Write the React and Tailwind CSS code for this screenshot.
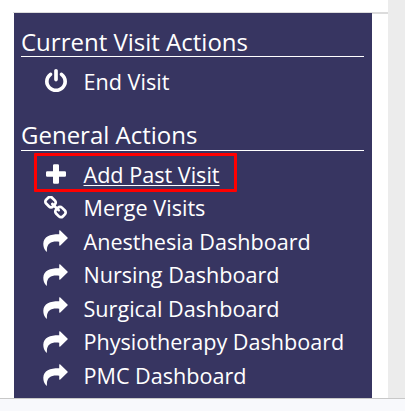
const icons = {
  power: {
    box: "128 0 1536 1664",
    size: "w-[22px] h-[23px] mb-[2.5px]",
    d: "M1664 896q0 156-61 298t-164 245-245 164-298 61-298-61-245-164-164-245-61-298q0-182 80.5-343t226.5-270q43-32 95.5-25t83.5 50q32 42 24.5 94.5t-49.5 84.5q-98 74-151.5 181t-53.5 228q0 104 40.5 198.5t109.5 163.5 163.5 109.5 198.5 40.5 198.5-40.5 163.5-109.5 109.5-163.5 40.5-198.5q0-121-53.5-228t-151.5-181q-42-32-49.5-84.5t24.5-94.5q31-43 84-50t95 25q146 109 226.5 270t80.5 343zm-640-768v640q0 52-38 90t-90 38-90-38-38-90v-640q0-52 38-90t90-38 90 38 38 90z",
  },
  plus: {
    box: "0 0 20 20",
    size: "w-5 h-5 mb-px",
    d: "M8.2 0.3h3.6q1.2 0 1.2 1.2v5.7h5.8q1.2 0 1.2 1.2v3.2q0 1.2-1.2 1.2h-5.8v5.7q0 1.2-1.2 1.2h-3.6q-1.2 0-1.2-1.2v-5.7h-5.8q-1.2 0-1.2-1.2v-3.2q0-1.2 1.2-1.2h5.8v-5.7q0-1.2 1.2-1.2z",
  },
  link: {
    box: "80 48 1632 1632",
    size: "w-[23px] h-[23px]",
    d: "M1520 1216q0-40-28-68l-208-208q-28-28-68-28-42 0-72 32 3 3 19 18.5t21.5 21.5 15 19 13 25.5 3.5 27.5q0 40-28 68t-68 28q-15 0-27.5-3.5t-25.5-13-19-15-21.5-21.5-18.5-19q-33 31-33 73 0 40 28 68l206 207q27 27 68 27 40 0 68-26l147-146q28-28 28-67zm-703-705q0-40-28-68l-206-207q-28-28-68-28-39 0-68 27l-147 146q-28 28-28 67 0 40 28 68l208 208q27 27 68 27 42 0 72-31-3-3-19-18.5t-21.5-21.5-15-19-13-25.5-3.5-27.5q0-40 28-68t68-28q15 0 27.5 3.5t25.5 13 19 15 21.5 21.5 18.5 19q33-31 33-73zm895 705q0 120-85 203l-147 146q-83 83-203 83-121 0-204-85l-206-207q-83-83-83-203 0-123 88-209l-88-88q-86 88-208 88-120 0-204-84l-208-208q-84-84-84-204t85-203l147-146q83-83 203-83 121 0 204 85l206 207q83 83 83 203 0 123-88 209l88 88q86-88 208-88 120 0 204 84l208 208q84 84 84 204z",
  },
  share: {
    box: "0 0 25 22",
    size: "w-[25px] h-[22px]",
    d: "M16.2 0.5Q16.7-0.1 17.3 0.5L24.5 7.5Q25 8.1 24.5 8.6L17.3 15.5Q16.2 16.1 16.2 15V11.7C9 11 3.6 12.5 3.9 21.2Q3.8 22 3.2 21.5C1.2 19.4 0.3 16.7 0.3 13.7C0.5 6.5 7.4 4.2 16.2 4.3Z",
  },
};

function Icon({ name }) {
  const icon = icons[name];
  return (
    <span className="flex w-[29px] shrink-0 justify-center">
      <svg viewBox={icon.box} preserveAspectRatio="none" className={icon.size} fill="currentColor">
        <path d={icon.d} />
      </svg>
    </span>
  );
}

function Action({ icon, label, active }) {
  return (
    <li className="relative flex h-[33.5px] items-center pl-5">
      <Icon name={icon} />
      <a className={`ml-[13.5px] whitespace-nowrap ${active ? "underline decoration-1 underline-offset-2" : ""}`}>{label}</a>
      {active && <span className="absolute left-[13px] -top-[4.5px] h-[39px] w-[203px] rounded-[1px] border-3 border-[#ff0000]" />}
    </li>
  );
}

function Section({ title, children, className, headClass, listClass }) {
  return (
    <section className={className}>
      <h2 className={`flex items-start whitespace-nowrap border-b border-white pt-[3px] text-[24px] leading-[29px] ${headClass}`}>{title}</h2>
      <ul className={`text-[21.6px] leading-[33px] ${listClass}`}>{children}</ul>
    </section>
  );
}

const dashboards = ["Anesthesia", "Nursing", "Surgical", "Physiotherapy", "PMC"];

export default function App() {
  return (
    <div className="flex h-[411px] w-[405px] flex-col overflow-hidden bg-white font-['Open_Sans',sans-serif] text-white">
      <div className="flex h-[398px]">
        <div className="w-[375px] flex-1 pt-3">
          <div className="ml-[13px] h-[386px] border-t border-[#dcdcdc]">
            <div className="flex h-[385px]">
              <aside className="ml-px w-[358px] bg-[#373561] pl-[7px] pr-2 pt-[11px]">
                <Section title="Current Visit Actions" headClass="h-[33px]" listClass="pt-2">
                  <Action icon="power" label="End Visit" />
                </Section>
                <Section title="General Actions" className="mt-[18.5px]" headClass="h-[34px]" listClass="pt-[6.5px]">
                  <Action icon="plus" label="Add Past Visit" active />
                  <Action icon="link" label="Merge Visits" />
                  {dashboards.map((name) => (
                    <Action key={name} icon="share" label={`${name} Dashboard`} />
                  ))}
                </Section>
              </aside>
              <div className="h-px flex-1 bg-[#dcdcdc]" />
            </div>
          </div>
        </div>
        <div className="w-[17px] bg-[#ececec]" />
      </div>
      <footer className="h-[13px] border-t border-[#c8c8c8] bg-[#f8f9fc]" />
    </div>
  );
}
